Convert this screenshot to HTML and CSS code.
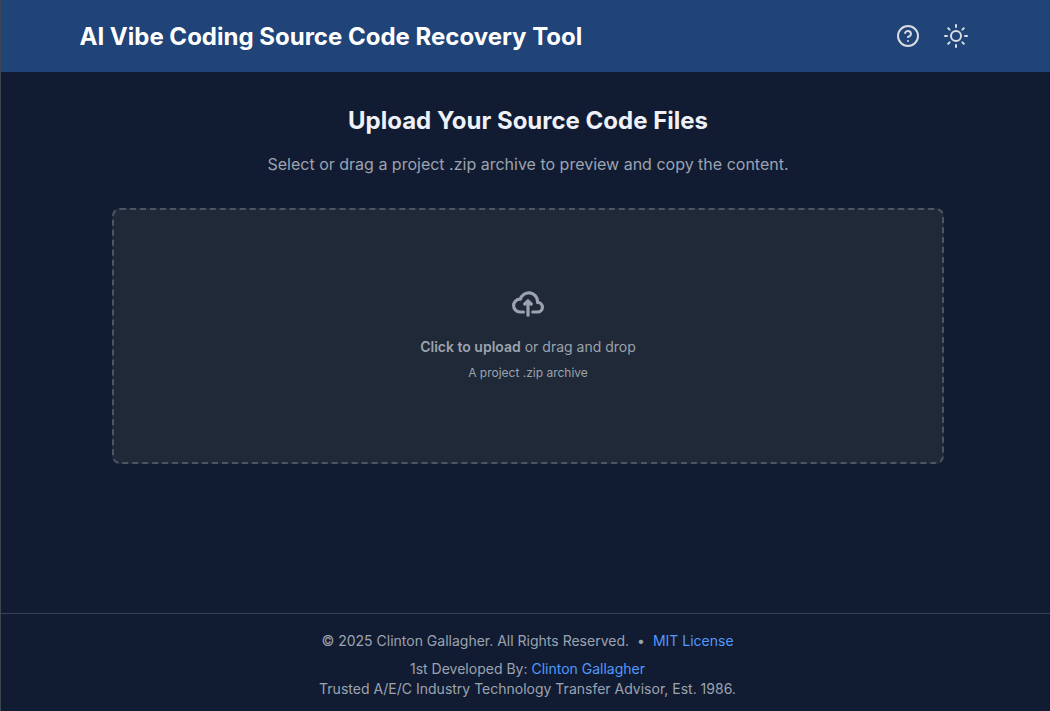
FILE: index.html
```html
<!DOCTYPE html>
<html lang="en">
<head>
<meta charset="utf-8">
<title>AI Vibe Coding Source Code Recovery Tool</title>
<link rel="stylesheet" href="styles.css">
</head>
<body>
<div class="app">
  <header class="topbar">
    <h1 class="brand">AI Vibe Coding Source Code Recovery Tool</h1>
    <div class="actions">
      <button class="icon-btn" aria-label="Help">
        <svg class="icon" viewBox="0 0 24 24" fill="none" stroke="currentColor" stroke-width="2" stroke-linecap="round" stroke-linejoin="round"><circle cx="12" cy="12" r="10"/><path d="M9.09 9a3 3 0 0 1 5.83 1c0 2-3 3-3 3"/><path d="M12 17h.01"/></svg>
      </button>
      <button class="icon-btn" aria-label="Theme">
        <svg class="icon" viewBox="0 0 24 24" fill="none" stroke="currentColor" stroke-width="2" stroke-linecap="round" stroke-linejoin="round"><circle cx="12" cy="12" r="5"/><path d="M12 1v2M12 21v2M4.220 4.220l1.420 1.420M18.360 18.360l1.420 1.420M1 12h2M21 12h2M4.220 19.780l1.420-1.420M18.360 5.640l1.420-1.420"/></svg>
      </button>
    </div>
  </header>
  <main class="content">
    <h2 class="title">Upload Your Source Code Files</h2>
    <p class="subtitle">Select or drag a project .zip archive to preview and copy the content.</p>
    <label class="dropzone">
      <svg class="cloud" viewBox="0 0 20 16" fill="none" stroke="currentColor" stroke-width="2" stroke-linecap="round" stroke-linejoin="round"><path d="M13 13h3a3 3 0 0 0 0-6h-.025A5.560 5.560 0 0 0 16 6.500 5.500 5.500 0 0 0 5.207 5.021C5.137 5.017 5.071 5 5 5a4 4 0 0 0 0 8h2.167M10 15V6m0 0L8 8m2-2 2 2"/></svg>
      <p class="drop-main"><strong>Click to upload</strong> or drag and drop</p>
      <p class="drop-hint">A project .zip archive</p>
    </label>
  </main>
  <footer class="footer">
    <p class="legal"><span>© 2025 Clinton Gallagher. All Rights Reserved.</span><span class="dot">•</span><a href="#">MIT License</a></p>
    <p class="credit">1st Developed By: <a href="#">Clinton Gallagher</a><br>Trusted A/E/C Industry Technology Transfer Advisor, Est. 1986.</p>
  </footer>
</div>
</body>
</html>
```
FILE: styles.css
```css
* { box-sizing: border-box; }
html, body { margin: 0; height: 100%; }
body {
  background: #111c33;
  color: #9ca3af;
  font-family: Inter, "Liberation Sans", sans-serif;
  overflow: hidden;
}
.app {
  display: flex;
  flex-direction: column;
  height: 711px;
  border-left: 1px solid #3f4652;
}
.topbar {
  display: flex;
  align-items: center;
  justify-content: space-between;
  height: 72px;
  padding: 0 82px 0 78.500px;
  background: #204378;
  flex: none;
}
.brand { margin: 2px 0 0; font-size: 24px; line-height: 32px; font-weight: 700; color: #fff; }
.actions { display: flex; gap: 24px; }
.icon-btn {
  display: flex;
  padding: 0;
  border: 0;
  background: none;
  color: #d8dce2;
}
.icon { width: 24px; height: 24px; }
.content {
  flex: 1;
  display: flex;
  flex-direction: column;
  align-items: center;
  padding: 33px 0 0 5px;
}
.title { margin: 0; font-size: 24px; line-height: 32px; font-weight: 700; color: #eef1f8; }
.subtitle { margin: 15px 0 0; font-size: 16px; line-height: 24px; color: #9ca3af; }
.dropzone {
  display: flex;
  flex-direction: column;
  align-items: center;
  justify-content: center;
  width: 832px;
  height: 256px;
  margin-top: 32px;
  padding: 20px 0 23px;
  background: #1f2937;
  border: 2px dashed #4b5563;
  border-radius: 8px;
}
.cloud { width: 32px; height: 32px; color: #9ca3af; margin-bottom: 17px; }
.drop-main { margin: 0 0 8px; font-size: 14px; line-height: 20px; }
.drop-main strong { font-weight: 600; }
.drop-hint { margin: 0; font-size: 12px; line-height: 16px; }
.footer {
  flex: none;
  height: 98px;
  padding: 17px 0 0 4px;
  border-top: 1px solid #374151;
  text-align: center;
  font-size: 14px;
  line-height: 20px;
}
.footer p { margin: 0; }
.credit { margin-top: 8px !important; }
.dot { margin: 0 8px; }
.footer a { color: #5299fb; text-decoration: none; }
```
